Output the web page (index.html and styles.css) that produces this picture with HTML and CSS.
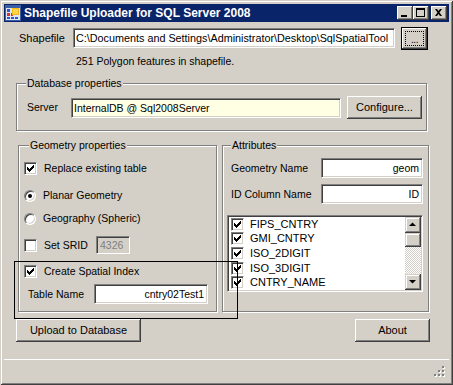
FILE: index.html
```html
<!DOCTYPE html>
<html>
<head>
<meta charset="utf-8">
<link rel="stylesheet" href="styles.css">
</head>
<body>
<div class="window">
  <div class="titlebar">
    <svg class="appicon" width="16" height="16" viewBox="0 0 16 16">
      <rect x="0.5" y="0.5" width="15" height="15" fill="#dfe6f0" stroke="#3a5ea8"/>
      <rect x="1" y="1" width="14" height="2" fill="#3a5ea8"/>
      <rect x="2" y="4" width="3" height="3" fill="#2f58c8"/>
      <rect x="2" y="8" width="3" height="3" fill="#d8322a"/>
      <rect x="6" y="8" width="2" height="3" fill="#d8322a"/>
      <rect x="7" y="3" width="7" height="7" fill="#f6b81c"/>
      <rect x="8" y="4" width="5" height="5" fill="#fbd64a"/>
      <rect x="2" y="12" width="3" height="2" fill="#2f58c8"/>
      <rect x="6" y="12" width="3" height="2" fill="#2f58c8"/>
      <rect x="10" y="12" width="3" height="2" fill="#2f58c8"/>
    </svg>
    <span class="title">Shapefile Uploader for SQL Server 2008</span>
    <div class="caption-btns">
      <span class="cbtn"><svg width="16" height="14" viewBox="0 0 16 14"><rect x="4" y="9" width="6" height="2" fill="#000"/></svg></span>
      <span class="cbtn"><svg width="16" height="14" viewBox="0 0 16 14"><path d="M3 2h9v9h-9z M4 4v6h7v-6z" fill="#000" fill-rule="evenodd"/></svg></span>
      <span class="cbtn close"><svg width="16" height="14" viewBox="0 0 16 14"><path d="M4 3h2l1.5 2 1.5-2h2l-2.5 3.5 2.5 3.5h-2l-1.5-2-1.5 2h-2l2.5-3.5z" fill="#000"/></svg></span>
    </div>
  </div>

  <div class="client">
    <div class="shape-row">
      <span class="shape-lbl">Shapefile</span>
      <div class="textbox path">C:\Documents and Settings\Administrator\Desktop\SqlSpatialTool</div>
      <div class="btn default browse"><span class="focus"><span class="dots">...</span></span></div>
    </div>
    <div class="info">251 Polygon features in shapefile.</div>

    <div class="group db">
      <span class="legend">Database properties</span>
      <div class="server-row">
        <span class="server-lbl">Server</span>
        <div class="textbox server">InternalDB @ Sql2008Server</div>
        <div class="btn configure">Configure...</div>
      </div>
    </div>

    <div class="columns">
      <div class="group geom">
        <span class="legend">Geometry properties</span>
        <div class="opt r1"><span class="check on"></span><span class="opt-text">Replace existing table</span></div>
        <div class="opt r2"><span class="radio on"></span><span class="opt-text radio-text">Planar Geometry</span></div>
        <div class="opt r3"><span class="radio"></span><span class="opt-text radio-text">Geography (Spheric)</span></div>
        <div class="opt r4"><span class="check"></span><span class="opt-text srid-lbl">Set SRID</span><div class="textbox srid">4326</div></div>
        <div class="opt r5"><span class="check on"></span><span class="opt-text">Create Spatial Index</span></div>
        <div class="opt r6"><span class="table-lbl">Table Name</span><div class="textbox table">cntry02Test1</div></div>
      </div>

      <div class="group attr">
        <span class="legend">Attributes</span>
        <div class="field a1"><span class="field-lbl">Geometry Name</span><div class="textbox right">geom</div></div>
        <div class="field a2"><span class="field-lbl">ID Column Name</span><div class="textbox right">ID</div></div>
        <div class="listbox">
          <div class="items">
            <div class="item"><span class="check on"></span>FIPS_CNTRY</div>
            <div class="item"><span class="check on"></span>GMI_CNTRY</div>
            <div class="item"><span class="check on"></span>ISO_2DIGIT</div>
            <div class="item"><span class="check on"></span>ISO_3DIGIT</div>
            <div class="item"><span class="check on"></span>CNTRY_NAME</div>
          </div>
          <div class="vscroll">
            <span class="sbtn"><svg width="16" height="16" viewBox="0 0 16 16"><path d="M4 9h7l-3.5-3.5z" fill="#000"/></svg></span>
            <span class="thumb"></span>
            <span class="track"></span>
            <span class="sbtn"><svg width="16" height="16" viewBox="0 0 16 16"><path d="M4 6h7l-3.5 3.5z" fill="#000"/></svg></span>
          </div>
        </div>
      </div>
    </div>

    <div class="actions">
      <div class="btn upload">Upload to Database</div>
      <div class="btn about">About</div>
    </div>

    <div class="status">
      <svg class="grip" width="12" height="12" viewBox="0 0 12 12">
        <g fill="#fff"><rect x="9" y="1" width="2" height="2"/><rect x="5" y="5" width="2" height="2"/><rect x="9" y="5" width="2" height="2"/><rect x="1" y="9" width="2" height="2"/><rect x="5" y="9" width="2" height="2"/><rect x="9" y="9" width="2" height="2"/></g>
        <g fill="#808080"><rect x="8" y="0" width="2" height="2"/><rect x="4" y="4" width="2" height="2"/><rect x="8" y="4" width="2" height="2"/><rect x="0" y="8" width="2" height="2"/><rect x="4" y="8" width="2" height="2"/><rect x="8" y="8" width="2" height="2"/></g>
      </svg>
    </div>
  </div>

  <div class="selection"></div>
</div>
</body>
</html>
```

FILE: styles.css
```css
* { box-sizing: border-box; }
html, body { margin: 0; padding: 0; background: #D4D0C8; }
body {
  font-family: "Liberation Sans", Arial, sans-serif;
  font-size: 10.5px;
  color: #000;
}
.window {
  position: relative;
  width: 453px;
  height: 385px;
  padding: 4px;
  background: #D4D0C8;
  box-shadow: inset 1px 1px #D4D0C8, inset -1px -1px #404040, inset 2px 2px #fff, inset -2px -2px #808080;
  display: flex;
  flex-direction: column;
  overflow: hidden;
}

/* title bar */
.titlebar {
  height: 18px;
  background: #0A246A;
  display: flex;
  align-items: center;
  padding: 0 2px 0 1px;
  flex: none;
}
.appicon { display: block; flex: none; }
.title {
  margin-left: 3px;
  color: #fff;
  font-weight: bold;
  font-size: 12px;
  white-space: nowrap;
  line-height: 14px;
}
.caption-btns { margin-left: auto; display: flex; }
.cbtn {
  width: 16px;
  height: 14px;
  background: #D4D0C8;
  box-shadow: inset -1px -1px #404040, inset 1px 1px #fff, inset -2px -2px #808080, inset 2px 2px #D4D0C8;
  display: block;
}
.cbtn svg { display: block; }
.cbtn.close { margin-left: 2px; }

/* client */
.client {
  margin-top: 1px;
  flex: 1;
  display: flex;
  flex-direction: column;
}

/* generic controls */
.textbox {
  height: 20px;
  background: #fff;
  border: 1px solid;
  border-color: #808080 #fff #fff #808080;
  box-shadow: inset 1px 1px #404040, inset -1px -1px #D4D0C8;
  padding: 0 2px 0 2px;
  line-height: 18px;
  white-space: nowrap;
  overflow: hidden;
  flex: none;
}
.textbox.right { text-align: right; padding-right: 3px; }
.btn {
  height: 23px;
  background: #D4D0C8;
  box-shadow: inset -1px -1px #404040, inset 1px 1px #fff, inset -2px -2px #808080;
  display: flex;
  align-items: center;
  justify-content: center;
  flex: none;
  line-height: 13px;
  font-size: 11px;
}
.btn.default {
  box-shadow: inset 0 0 0 1px #000, inset -2px -2px #404040, inset 2px 2px #fff, inset -3px -3px #808080;
}

/* shapefile row */
.shape-row {
  margin-top: 4px;
  display: flex;
  align-items: flex-start;
  height: 23px;
}
.shape-lbl { margin-left: 15px; width: 54px; line-height: 23px; font-size: 11px; }
.textbox.path { width: 322px; margin-top: 1px; padding-left: 2px; font-size: 10.8px; }
.browse { margin-left: 6px; width: 27px; }
.focus {
  width: 19px;
  height: 15px;
  border: 1px dotted #000;
  display: flex;
  align-items: flex-end;
  justify-content: center;
}
.dots { line-height: 8px; height: 9px; font-size: 10px; letter-spacing: -0.5px; }

.info { margin: 5px 0 0 72px; line-height: 13px; height: 13px; }

/* group boxes */
.group {
  position: relative;
  border: 1px solid #808080;
  box-shadow: inset 1px 1px #fff, 1px 1px #fff;
  flex: none;
}
.legend {
  position: absolute;
  top: -7px;
  background: #D4D0C8;
  padding: 0 1px;
  line-height: 13px;
  white-space: nowrap;
}
.db { margin: 15px 0 0 12px; width: 411px; height: 48px; padding-top: 12px; }
.db .legend { left: 9px; }
.server-row { display: flex; align-items: flex-start; height: 23px; }
.server-lbl { margin-left: 10px; width: 44px; line-height: 23px; }
.textbox.server { width: 270px; margin-top: 2px; background: #FFFFE4; }
.configure { margin-left: 6px; width: 75px; }

.columns { margin-top: 14px; display: flex; height: 167px; }
.geom { margin-left: 14px; width: 199px; height: 167px; padding-top: 0; }
.geom .legend { left: 10px; }
.attr { margin-left: 5px; width: 207px; height: 167px; }
.attr .legend { left: 8px; }

.opt { display: flex; align-items: center; height: 13px; }
.r1 { margin-top: 16px; }
.r2 { margin-top: 14px; }
.r3 { margin-top: 10px; }
.r4 { margin-top: 11px; height: 18px; }
.r5 { margin-top: 11px; }
.r6 { margin-top: 6px; height: 20px; }
.opt .check { margin-left: 5px; }
.opt-text { margin-left: 7px; white-space: nowrap; line-height: 13px; }
.opt .radio { margin-left: 5px; }
.radio-text { margin-left: 7px; }
.srid-lbl { width: 52px; }
.textbox.srid { width: 34px; height: 18px; line-height: 16px; background: #D4D0C8; color: #808080; padding-left: 3px; }
.table-lbl { margin-left: 9px; width: 66px; }
.textbox.table { width: 114px; text-align: right; padding-right: 3px; }

.check {
  width: 13px;
  height: 13px;
  flex: none;
  background: #fff;
  border: 1px solid;
  border-color: #808080 #fff #fff #808080;
  box-shadow: inset 1px 1px #404040, inset -1px -1px #D4D0C8;
  display: inline-block;
}
.check.on {
  background: #fff url("data:image/svg+xml;utf8,<svg xmlns='http://www.w3.org/2000/svg' width='11' height='11' viewBox='0 0 11 11'><path d='M2 4h1v3h-1z M3 5h1v3h-1z M4 6h1v3h-1z M5 5h1v3h-1z M6 4h1v3h-1z M7 3h1v3h-1z M8 2h1v3h-1z' fill='black'/></svg>") no-repeat 0 0;
}
.radio {
  width: 12px;
  height: 12px;
  flex: none;
  border-radius: 50%;
  background: #fff;
  border: 1px solid;
  border-color: #808080 #fff #fff #808080;
  box-shadow: inset 1px 1px #404040, inset -1px -1px #D4D0C8;
  position: relative;
}
.radio.on::after {
  content: "";
  position: absolute;
  left: 3px;
  top: 3px;
  width: 4px;
  height: 4px;
  border-radius: 50%;
  background: #000;
}

/* attributes */
.field { display: flex; align-items: center; height: 20px; }
.a1 { margin-top: 12px; }
.a2 { margin-top: 6px; }
.field-lbl { margin-left: 8px; width: 90px; white-space: nowrap; }
.field .textbox { width: 102px; }
.listbox {
  margin: 11px 0 0 4px;
  width: 196px;
  height: 77px;
  background: #fff;
  border: 1px solid;
  border-color: #808080 #fff #fff #808080;
  box-shadow: inset 1px 1px #404040, inset -1px -1px #D4D0C8;
  padding: 1px;
  display: flex;
}
.items { flex: 1; padding-top: 0; }
.item {
  height: 14.6px;
  display: flex;
  align-items: center;
  line-height: 13px;
  white-space: nowrap;
  font-size: 11px;
}
.item .check { margin: 0 6px 0 2px; }
.vscroll { width: 16px; display: flex; flex-direction: column; }
.sbtn {
  width: 16px;
  height: 16px;
  background: #D4D0C8;
  box-shadow: inset -1px -1px #404040, inset 1px 1px #D4D0C8, inset -2px -2px #808080, inset 2px 2px #fff;
  display: block;
  flex: none;
}
.sbtn svg { display: block; }
.thumb {
  height: 14px;
  flex: none;
  background: #D4D0C8;
  box-shadow: inset -1px -1px #404040, inset 1px 1px #D4D0C8, inset -2px -2px #808080, inset 2px 2px #fff;
}
.track {
  flex: 1;
  background-color: #D4D0C8;
  background-image: conic-gradient(#fff 25%, #D4D0C8 0 50%, #fff 0 75%, #D4D0C8 0);
  background-size: 2px 2px;
}

/* actions */
.actions { margin-top: 7px; display: flex; height: 23px; }
.upload { margin-left: 12px; width: 125px; }
.about { margin-left: auto; margin-right: 19px; width: 75px; }

.status {
  margin-top: 17px;
  flex: 1;
  border-top: 1px solid #fff;
  display: flex;
  align-items: flex-end;
  justify-content: flex-end;
  padding: 0 3px 3px 0;
}
.grip { display: block; }

.selection {
  position: absolute;
  left: 14px;
  top: 261px;
  width: 224px;
  height: 58px;
  border: 1px solid #000;
  pointer-events: none;
}
```
